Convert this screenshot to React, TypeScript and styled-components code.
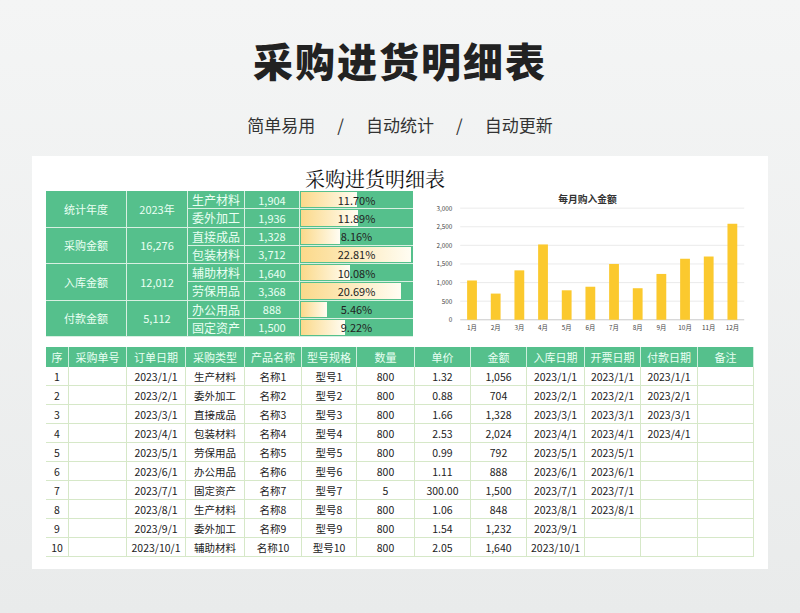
import React from "react";
import styled, { createGlobalStyle } from "styled-components";

const G = createGlobalStyle`
  body{margin:0;background:#eef0f0;font-family:"Noto Sans CJK SC","Noto Sans",sans-serif;}
`;
const Page = styled.div`width:800px;height:613px;display:flex;flex-direction:column;align-items:center;background:linear-gradient(#f4f5f5,#e9ebeb);`;
const Title = styled.h1`margin:35px 0 0;font-size:40px;font-weight:900;color:#222;letter-spacing:2px;line-height:50px;`;
const Sub = styled.div`margin-top:28px;font-size:17px;color:#333;display:flex;gap:22px;line-height:24px;`;
const Card = styled.div`margin-top:19px;width:736px;height:413px;background:#fff;box-sizing:border-box;padding:10px 14px 0;display:flex;flex-direction:column;`;
const SheetTitle = styled.div`text-align:center;font-size:20px;color:#111;line-height:25px;margin-left:-50px;font-family:"Noto Serif CJK SC","Liberation Serif","Noto Sans CJK SC",serif;`;
const Top = styled.div`display:flex;gap:8px;`;
const Sum = styled.div`display:grid;grid-template-columns:81px 61px 57px 55px 113px;grid-template-rows:repeat(8,18.25px);width:367px;background:#55c08c;`;
const SCell = styled.div`border-right:1px solid #d8f0e2;border-bottom:1px solid #d8f0e2;color:#eafff3;font-size:11px;display:flex;align-items:center;justify-content:center;`;
const BarCell = styled.div`position:relative;border-bottom:1px solid #d8f0e2;display:flex;align-items:center;`;
const Bar = styled.div`position:absolute;left:1px;top:1px;bottom:1px;background:linear-gradient(90deg,#fbd98a,#fffdf3);`;
const Pct = styled.span`position:relative;width:100%;text-align:center;font-size:11px;color:#222;`;
const Chart = styled.svg`width:340px;height:150px;margin-top:-4px;`;
const Table = styled.div`margin-top:10px;display:grid;grid-template-columns:23px 58px 59px 59px 57px 55px 58px 56px 56px 58px 56px 57px 56px;width:708px;`;
const H = styled.div`background:#55c08c;color:#eafff3;font-size:11px;height:20px;display:flex;align-items:center;justify-content:center;border-right:1px solid #cdeedd;`;
const C = styled.div`height:18px;border-right:1px solid #d6e8c8;border-bottom:1px solid #d6e8c8;font-size:10.5px;color:#222;display:flex;align-items:center;justify-content:center;&:first-child{border-left:1px solid #d6e8c8;}`;

const sumRows=[["生产材料","1,904",11.70],["委外加工","1,936",11.89],["直接成品","1,328",8.16],["包装材料","3,712",22.81],["辅助材料","1,640",10.08],["劳保用品","3,368",20.69],["办公用品","888",5.46],["固定资产","1,500",9.22]] as const;
const left=[["统计年度","2023年"],["采购金额","16,276"],["入库金额","12,012"],["付款金额","5,112"]];
const vals=[1056,704,1328,2024,792,888,1500,848,1232,1640,1700,2580];
const types=["生产材料","委外加工","直接成品","包装材料","劳保用品","办公用品","固定资产","生产材料","委外加工","辅助材料"];
const prices=[1.32,0.88,1.66,2.53,0.99,1.11,300,1.06,1.54,2.05];
const amts=["1,056","704","1,328","2,024","792","888","1,500","848","1,232","1,640"];
const qty=[800,800,800,800,800,800,5,800,800,800];

export default function App(){
  const y0=134,yh=114;const x0=40,w=290;
  return <Page><G/>
    <Title>采购进货明细表</Title>
    <Sub><span>简单易用</span><span>/</span><span>自动统计</span><span>/</span><span>自动更新</span></Sub>
    <Card>
      <SheetTitle>采购进货明细表</SheetTitle>
      <Top>
        <Sum>
          {sumRows.map((r,i)=><React.Fragment key={i}>
            {i%2===0&&<><SCell style={{gridColumn:1,gridRow:`${i+1} / span 2`}}>{left[i/2][0]}</SCell><SCell style={{gridColumn:2,gridRow:`${i+1} / span 2`}}>{left[i/2][1]}</SCell></>}
            <SCell style={{gridColumn:3,gridRow:i+1,fontSize:12}}>{r[0]}</SCell>
            <SCell style={{gridColumn:4,gridRow:i+1}}>{r[1]}</SCell>
            <BarCell style={{gridColumn:5,gridRow:i+1}}><Bar style={{width:`${r[2]/22.81*110}px`}}/><Pct>{r[2].toFixed(2)}%</Pct></BarCell>
          </React.Fragment>)}
        </Sum>
        <Chart viewBox="0 0 340 150">
          <text x="170" y="15" textAnchor="middle" fontSize="10" fill="#333" fontWeight="bold">每月购入金额</text>
          {[0,500,1000,1500,2000,2500,3000].map(v=>{const y=y0-v/3000*yh;return <g key={v}><line x1={x0} x2={x0+w} y1={y} y2={y} stroke={v?"#e6e6e6":"#bbb"} strokeWidth="0.8"/><text x={x0-8} y={y+2.5} fontSize="6.5" fill="#444" textAnchor="end">{v.toLocaleString()}</text></g>})}
          {vals.map((v,i)=>{const cx=x0+w/12*(i+0.5);const h=v/3000*yh;return <g key={i}><rect x={cx-5} y={y0-h} width="10" height={h} fill="#fbc92e"/><text x={cx} y={y0+10} fontSize="6.5" fill="#444" textAnchor="middle">{i+1}月</text></g>})}
        </Chart>
      </Top>
      <Table>
        {["序","采购单号","订单日期","采购类型","产品名称","型号规格","数量","单价","金额","入库日期","开票日期","付款日期","备注"].map(h=><H key={h}>{h}</H>)}
        {types.map((t,i)=>{const d=`2023/${i+1}/1`;return <React.Fragment key={i}>
          <C>{i+1}</C><C></C><C>{d}</C><C>{t}</C><C>名称{i+1}</C><C>型号{i+1}</C><C>{qty[i]}</C><C>{prices[i].toFixed(2)}</C><C>{amts[i]}</C>
          <C>{d}</C><C>{i<8?d:""}</C><C>{i<4?d:""}</C><C></C>
        </React.Fragment>})}
      </Table>
    </Card>
  </Page>;
}
